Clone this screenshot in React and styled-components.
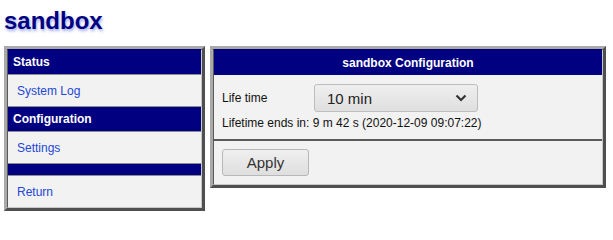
import React, { useState } from 'react';
import styled, { createGlobalStyle } from 'styled-components';

const GlobalStyle = createGlobalStyle`
  html, body {
    margin: 0;
    padding: 0;
    background: #fff;
    font-family: "Liberation Sans", Arial, sans-serif;
  }
`;

const menu = [
  { type: 'header', label: 'Status' },
  { type: 'link', label: 'System Log' },
  { type: 'header', label: 'Configuration' },
  { type: 'link', label: 'Settings' },
  { type: 'header', label: '' },
  { type: 'link', label: 'Return' },
];

const App = () => {
  const [lifetime, setLifetime] = useState('10 min');

  return (
    <Page>
      <GlobalStyle />
      <Title>sandbox</Title>
      <Columns>
        <Panel $width="201px">
          <Inner>
            {menu.map((item, index) =>
              item.type === 'header' ? (
                <NavHeader key={index} $empty={!item.label}>
                  {item.label}
                </NavHeader>
              ) : (
                <NavLink key={index} href="#">
                  {item.label}
                </NavLink>
              )
            )}
          </Inner>
        </Panel>
        <Panel $grow>
          <Inner>
            <PanelTitle>sandbox Configuration</PanelTitle>
            <Body>
              <FieldRow>
                <Label>Life time</Label>
                <SelectBox>
                  <Select
                    value={lifetime}
                    onChange={e => setLifetime(e.target.value)}
                  >
                    <option>5 min</option>
                    <option>10 min</option>
                    <option>30 min</option>
                    <option>60 min</option>
                  </Select>
                  <Chevron width="12" height="8" viewBox="0 0 12 8">
                    <polyline points="1.5,1.5 6,6 10.5,1.5" />
                  </Chevron>
                </SelectBox>
              </FieldRow>
              <Info>Lifetime ends in: 9 m 42 s (2020-12-09 09:07:22)</Info>
            </Body>
            <Footer>
              <Button>Apply</Button>
            </Footer>
          </Inner>
        </Panel>
      </Columns>
    </Page>
  );
};

const Page = styled.div`
  padding: 7px 7px 0 4px;
`;

const Title = styled.h1`
  margin: 0 0 12px 0;
  font-size: 24px;
  line-height: 27px;
  font-weight: 700;
  color: #000080;
  text-shadow: 1px 2px 3px rgba(80, 100, 220, 0.55);
`;

const Columns = styled.div`
  display: flex;
  align-items: flex-start;
  gap: 5px;
`;

const Panel = styled.div`
  width: ${p => p.$width || 'auto'};
  flex: ${p => (p.$grow ? '1' : '0 0 auto')};
  box-sizing: border-box;
  border-width: 3px;
  border-style: solid;
  border-color: #a9a9a9 #4f4f4f #4f4f4f #a9a9a9;
`;

const Inner = styled.div`
  display: flex;
  flex-direction: column;
  background: #f2f2f2;
  border-width: 1px;
  border-style: solid;
  border-color: #000070 #c8c8c8 #c8c8c8 #5a5a5a;
`;

const NavHeader = styled.div`
  height: ${p => (p.$empty ? '11px' : '24px')};
  display: flex;
  align-items: center;
  padding-left: 5px;
  background: #000080;
  color: #fff;
  font-size: 12px;
  font-weight: 700;
  & + & ,
  a + & {
    border-top: 1px solid #8c8c8c;
  }
`;

const NavLink = styled.a`
  height: 31px;
  display: flex;
  align-items: center;
  padding-left: 9px;
  border-top: 1px solid #8c8c8c;
  color: #2347d6;
  font-size: 12px;
  text-decoration: none;
`;

const PanelTitle = styled.div`
  height: 25px;
  display: flex;
  align-items: center;
  justify-content: center;
  background: #000080;
  color: #fff;
  font-size: 12px;
  font-weight: 700;
`;

const Body = styled.div`
  padding: 9px 8px 9px 8px;
  display: flex;
  flex-direction: column;
  gap: 4px;
`;

const FieldRow = styled.div`
  display: flex;
  align-items: center;
`;

const Label = styled.span`
  width: 92px;
  font-size: 12px;
  color: #111;
`;

const SelectBox = styled.div`
  position: relative;
  width: 164px;
  height: 28px;
`;

const Select = styled.select`
  appearance: none;
  width: 100%;
  height: 100%;
  box-sizing: border-box;
  padding: 0 0 0 12px;
  border: 1px solid #bdbdbd;
  border-radius: 3px;
  background: linear-gradient(#efefef, #dfdfdf);
  color: #222;
  font-family: "Liberation Sans", Arial, sans-serif;
  font-size: 15px;
  outline: none;
`;

const Chevron = styled.svg`
  position: absolute;
  right: 11px;
  top: 10px;
  pointer-events: none;
  fill: none;
  stroke: #333;
  stroke-width: 2.2;
`;

const Info = styled.div`
  font-size: 12px;
  line-height: 14px;
  color: #111;
`;

const Footer = styled.div`
  border-top: 2px solid #5a5a5a;
  padding: 8px;
`;

const Button = styled.button`
  width: 87px;
  height: 27px;
  border: 1px solid #b8b8b8;
  border-radius: 3px;
  background: linear-gradient(#f0f0f0, #dedede);
  color: #333;
  font-family: "Liberation Sans", Arial, sans-serif;
  font-size: 15px;
  padding: 0;
  cursor: pointer;
`;

export default App;
